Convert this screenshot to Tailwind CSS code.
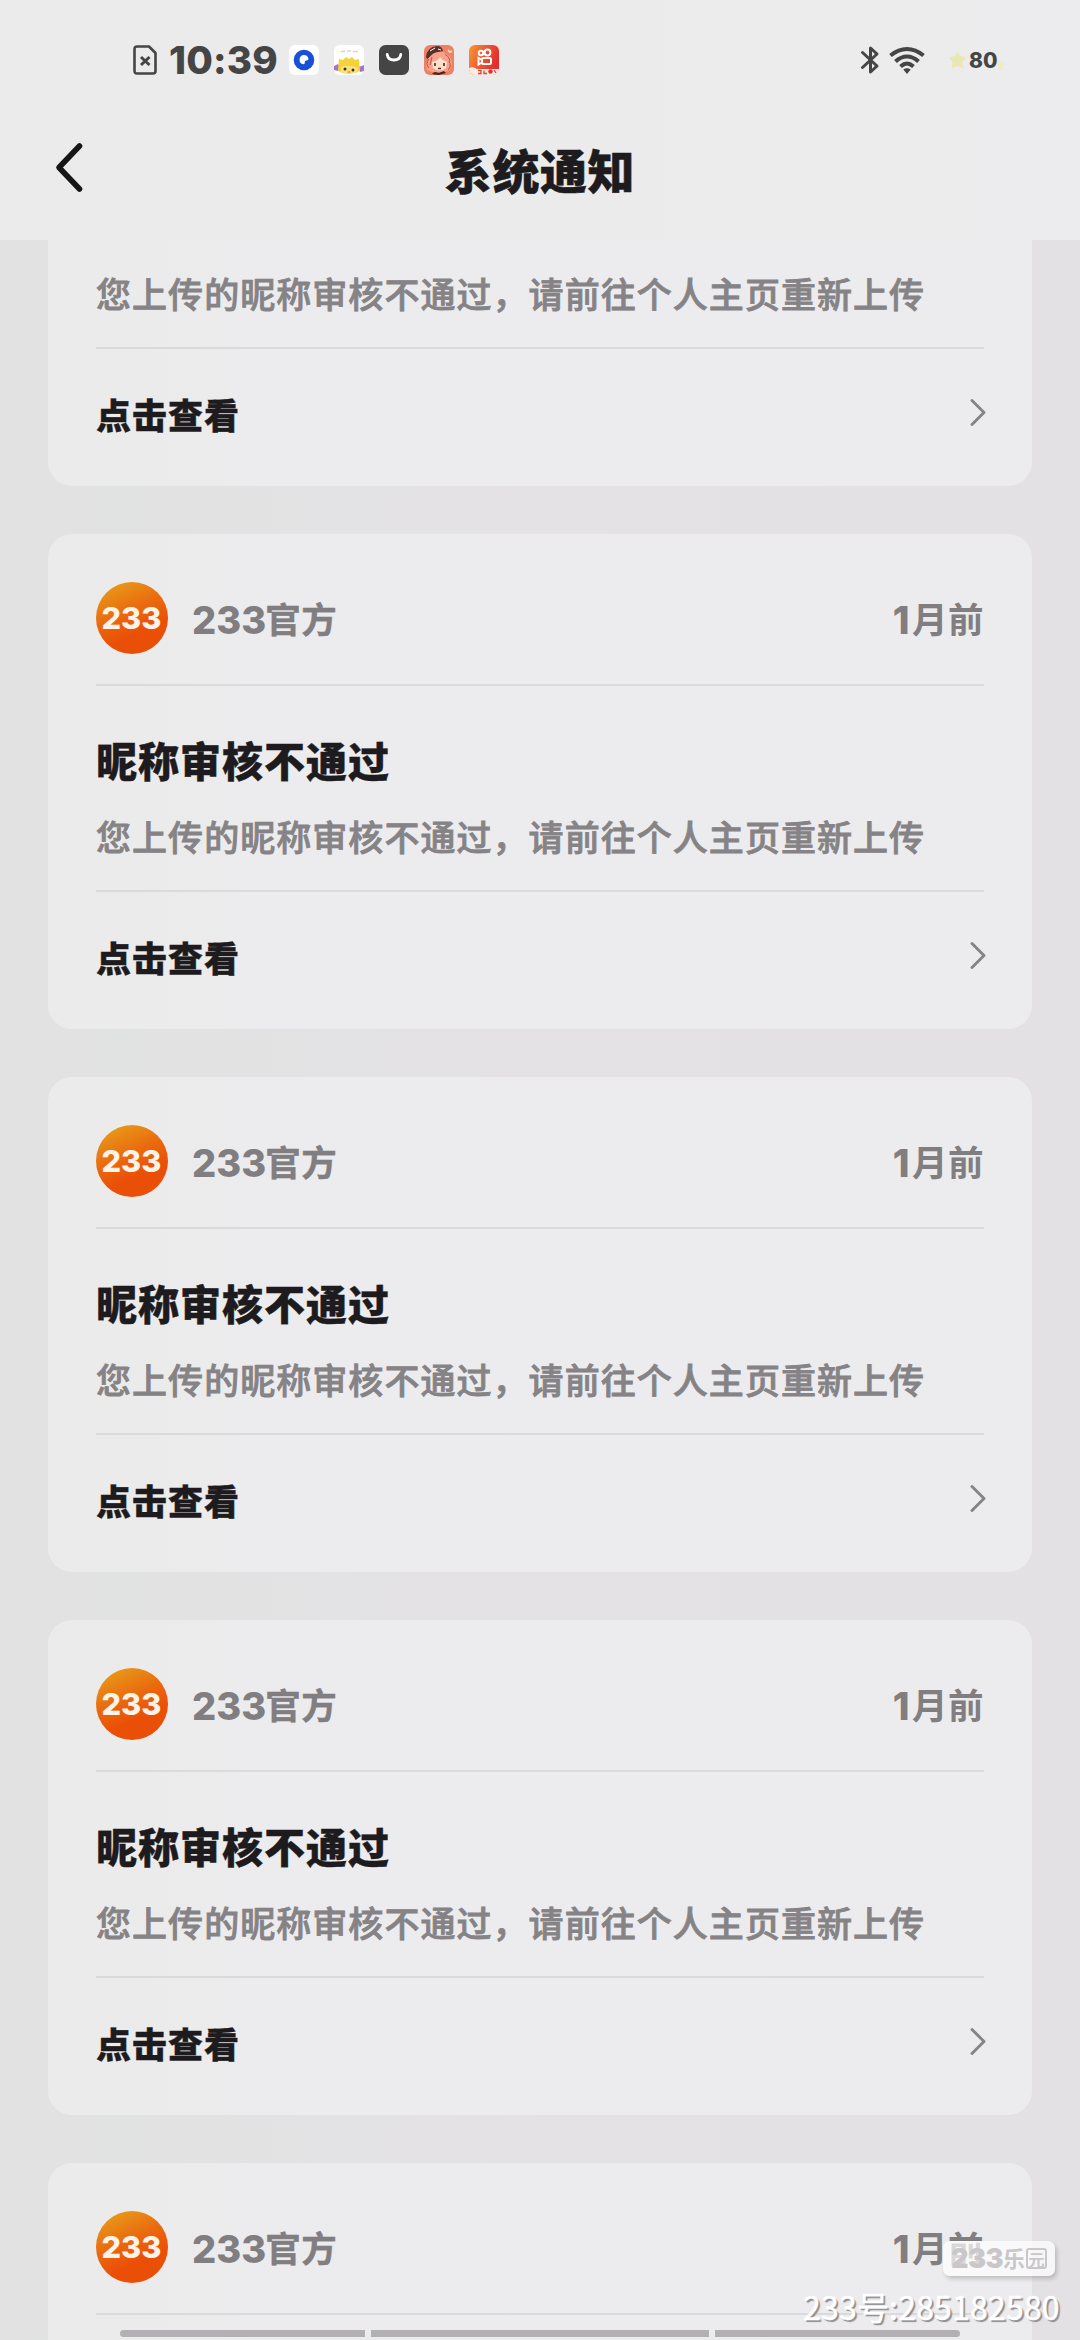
<!DOCTYPE html>
<html lang="zh-CN">
<head>
<meta charset="utf-8">
<title>系统通知</title>
<script src="https://cdn.jsdelivr.net/npm/@tailwindcss/browser@4"></script>
</head>
<body class="relative flex h-[2340px] w-[1080px] flex-col overflow-hidden bg-linear-to-r from-[#e1e2e1] via-[#e3e2e4] via-30% to-[#e3e1e4] font-['Noto_Sans_CJK_SC',sans-serif] text-[#1d1b1e]">

<header class="h-[240px] shrink-0 bg-linear-to-r from-[#ebebeb] to-[#ecebed]">
  <!-- Status bar -->
  <div class="flex h-[120px] items-center pr-[79px] pl-[133px] text-[#454545]">
    <svg class="h-[30px] w-[24px]" viewBox="0 0 24 30" fill="none" stroke="currentColor" stroke-width="2.6"><path d="M4 1.5H16L22.5 8V26Q22.5 28.5 20 28.5H4Q1.5 28.5 1.5 26V4Q1.5 1.5 4 1.5Z" stroke-linejoin="round"/><path d="M8 12L16.5 20M16.5 12L8 20" stroke-width="3"/></svg>
    <span class="ml-[12px] w-[108px] font-['Inter',sans-serif] text-[38.5px] leading-none font-extrabold tracking-[0.2px] whitespace-nowrap">10:39</span>
    <div class="ml-3 flex gap-[15px]">
      <svg class="size-[30px]" viewBox="0 0 30 30"><rect width="30" height="30" rx="6" fill="#fff"/><circle cx="15" cy="15" r="10.3" fill="#1a50d8"/><path d="M10.6 15a4.4 4.4 0 0 1 8.8-1.2q.4 1.8-2 1.8-2 .2-1.6 1.9.2 1.9-1.4 1.8A4.4 4.4 0 0 1 10.6 15Z" fill="#fff"/></svg>
      <svg class="size-[30px]" viewBox="0 0 30 30"><rect width="30" height="30" rx="6" fill="#fff"/><path d="M7 6.5h4M13 6h4M19 6.5h5" stroke="#d5d5d5" stroke-width="1.5"/><path d="M0 21l4-2 2 3-2 4-4-1zM30 20l-5 2 1 5 4-1z" fill="#a873cf"/><path d="M5 14l4 1 3-3 3 2 3-2 3 3 4-1 1 12q-11 6-22 0Z" fill="#f3d23b"/><path d="M7 22q8-3 17 1l-1 4q-8 3-16 0Z" fill="#fbe37a"/><circle cx="11" cy="24" r="1.5" fill="#333"/><circle cx="19" cy="25" r="1.5" fill="#333"/><path d="M13.500 27h3" stroke="#ef8b3a" stroke-width="1.500"/></svg>
      <svg class="size-[30px]" viewBox="0 0 30 30"><rect width="30" height="30" rx="6.500" fill="#454545"/><path d="M8.200 9.500Q9 15 15 15T21.800 9.500" fill="none" stroke="#fff" stroke-width="2.800" stroke-linecap="round"/></svg>
      <svg class="size-[30px]" viewBox="0 0 30 30"><rect width="30" height="30" rx="6" fill="#ee8063"/><path d="M2 12Q3 2 13 1q5 0 6 5l-7 2-9 6Z" fill="#57302b"/><path d="M6 6l5-3M14 4l3 1" stroke="#fff" stroke-width="1"/><path d="M4 14Q10 5 19 7q9 3 9 12l-2 6-5 2H8l-5-2-1-6Z" fill="#f8a28b"/><path d="M8 17q6-1 8-5 3 4 7 5l-1 6q-6 5-13 0Z" fill="#fde0cb"/><path d="M11 18v3M20 18v3M14 23.500h3" stroke="#57302b" stroke-width="1.700"/><path d="M5 14q-4 5 0 9M8 12l-2 8M25 16q3 5-1 9M21 9q5 3 5 7" stroke="#b8503f" stroke-width="1" fill="none"/><path d="M24 5l2 2 2-1" stroke="#fbd9c4" stroke-width="2"/><path d="M8 28.500l3-1.500 4 1 5-2 2 2-7 2-5-.5Z" fill="#3f2825"/></svg>
      <svg class="size-[30px]" viewBox="0 0 30 30"><defs><linearGradient id="ks" x1="0" y1="0" x2="1" y2=".4"><stop offset="0" stop-color="#f79a32"/><stop offset=".6" stop-color="#ed5030"/><stop offset="1" stop-color="#e22e30"/></linearGradient></defs><rect width="30" height="30" rx="6" fill="url(#ks)"/><g fill="none" stroke="#fff" stroke-width="2"><circle cx="12" cy="8" r="2.300"/><circle cx="18.500" cy="7.500" r="2.900"/><rect x="13" y="13" width="9" height="6" rx="1.500"/><path d="M13 15L9.500 13V19.500L13 17.500"/></g><path d="M0 23Q4 21 8 24H30Q30 30 24 30H6Q0 30 0 23Z" fill="#fbe9e2"/><path d="M9 25.500h3v3h-3M15 25.500v3h3M25 25l2 3" fill="none" stroke="#ce4a3a" stroke-width="1.300"/><circle cx="21.500" cy="26.500" r="2.200" fill="#df3033"/></svg>
    </div>
    <div class="ml-auto flex items-center">
      <svg class="h-[30px] w-[20px]" viewBox="0 0 20 30" fill="none" stroke="currentColor" stroke-width="3" stroke-linejoin="round" stroke-linecap="round"><path d="M2.500 7.500L17 21L10.500 27V3L17 9L2.500 22.500"/></svg>
      <svg class="ml-[9px] h-[30px] w-[36px]" viewBox="0 0 36 30" fill="none" stroke="currentColor" stroke-width="4"><path d="M1.500 10.500Q9.500 4 18 4T34.500 10.500"/><path d="M6.500 16.500Q12 11.500 18 11.500T29.500 16.500"/><path d="M11.500 21.500Q15 18.500 18 18.500T24.500 21.500"/><path d="M14.300 24.500Q18 22 21.700 24.500L18 29Z" fill="currentColor" stroke="none"/></svg>
      <svg class="ml-[24px] h-[20px] w-[17px]" viewBox="0 0 17 20"><path d="M9 1l2.500 5 5.500 1-3.500 5 1 6-6-2-6 2 1-6L0 7.500l6-1.500Z" fill="#e9e7b4"/></svg>
      <span class="ml-[3px] w-[28px] font-['Inter',sans-serif] text-[21px] leading-none font-extrabold">80</span>
      <svg class="mt-2 -mr-1 h-[14px] w-[8px]" viewBox="0 0 8 14"><path d="M3 3l1.500 3 3 1-2.500 2 1 4-5-1V5Z" fill="#eeecc4"/></svg>
    </div>
  </div>
  <!-- Title bar -->
  <div class="grid h-[98px] grid-cols-[200px_1fr_200px] items-center">
    <svg class="-mt-1 ml-[54px] h-[52px] w-[30px]" viewBox="0 0 30 52" fill="none" stroke="#161616" stroke-width="5.600" stroke-linecap="round" stroke-linejoin="round"><path d="M25.500 5L5 26.500L25.500 48"/></svg>
    <h1 class="text-center text-[47px] leading-[48px] font-black tracking-[0.6px] [-webkit-text-stroke:0.5px_#1d1b1e]">系统通知</h1>
  </div>
</header>

<main id="list" class="flex h-[2100px] shrink-0 flex-col gap-12 overflow-hidden px-12"></main>

<!-- Gesture bar -->
<div class="absolute top-[2330px] left-[120px] flex h-[7px] w-[840px] gap-[6px]">
  <i class="w-[245px] rounded-l-full bg-[#b3b0b3]"></i><i class="flex-1 bg-[#b3b0b3]"></i><i class="w-[245px] rounded-r-full bg-[#b3b0b3]"></i>
</div>

<!-- Watermark -->
<div class="absolute top-[2241px] left-[943px] flex h-[35px] w-[112px] items-center justify-center rounded-[7px] bg-white/70 whitespace-nowrap text-[#c9c7c9] shadow-[2px_3px_4px_rgba(0,0,0,0.18)]">
  <span class="font-['Inter',sans-serif] text-[27px] leading-none font-black tracking-[-0.5px]">233</span><span class="-mt-1 text-[22px] leading-none font-bold">乐</span><span class="ml-px flex size-[21px] items-center justify-center rounded-[3px] border-2 border-[#c9c7c9] text-[16px] leading-none font-bold">元</span>
</div>
<div class="absolute top-[2286px] left-[803px] text-[32px] leading-[40px] tracking-[0.2px] whitespace-nowrap text-white [-webkit-text-stroke:0.4px_white] [text-shadow:2px_2px_1px_#8f8d90]">233号:285182580</div>

<script>
  const fill = 'bg-linear-to-r from-[#ebebeb] via-[#ecebed] via-20% to-[#ecebed]';
  const head = `
    <div class="flex h-[150px] shrink-0 items-center pt-[18px] text-[35.5px] leading-none font-bold tracking-[0.5px] text-[#807e80]">
      <svg class="size-[72px]" viewBox="0 0 72 72">
        <defs><linearGradient id="av" x1=".15" y1="0" x2=".6" y2="1"><stop offset="0" stop-color="#e7a01a"/><stop offset=".45" stop-color="#ea6a0e"/><stop offset=".75" stop-color="#ea4f07"/></linearGradient></defs>
        <circle cx="36" cy="36" r="36" fill="url(#av)"/>
        <text x="5.500" y="47" textLength="60" lengthAdjust="spacingAndGlyphs" font-family="Inter, sans-serif" font-weight="800" font-size="30" letter-spacing="0" fill="#fff3e8">233</text>
      </svg>
      <span class="mt-[3px] ml-6 font-['Inter',sans-serif] text-[38px] font-extrabold tracking-normal">233</span><span class="-mt-px ml-[-1px] [-webkit-text-stroke:0.4px_#807e80]">官方</span>
      <span class="mt-[3px] mr-[2px] ml-auto font-['Inter',sans-serif] text-[38px] font-extrabold">1</span><span class="-mt-px">月前</span>
    </div>
    <div class="h-[2px] shrink-0 bg-[#dad9db]"></div>`;
  const foot = `
    <p class="text-[35px] leading-9 font-medium tracking-[1.05px] whitespace-nowrap text-[#858385] [-webkit-text-stroke:0.8px_#858385]">您上传的昵称审核不通过，请前往个人主页重新上传</p>
    <div class="mt-9 h-[2px] bg-[#dad9db]"></div>
    <div class="flex h-[132px] items-center justify-between text-[35px] leading-9 font-black tracking-[1px]">
      <span class="-mt-0.5 [-webkit-text-stroke:0.4px_#1d1b1e]">点击查看</span>
      <svg class="-mt-1.5 -mr-0.5 h-[28px] w-[18px]" viewBox="0 0 18 28" fill="none" stroke="#858386" stroke-width="2.900" stroke-linecap="round" stroke-linejoin="round"><path d="M4 2.500L16 14.500L4 26.500"/></svg>
    </div>`;
  const title = `<h2 class="mt-[52px] mb-[38px] text-[41px] leading-[42px] font-black tracking-[1px] [-webkit-text-stroke:0.4px_#1d1b1e]">昵称审核不通过</h2>`;
  document.getElementById('list').innerHTML =
    `<article class="h-[246px] shrink-0 rounded-b-[24px] px-12 pt-[35px] ${fill}">${foot}</article>` +
    `<article class="flex h-[495px] shrink-0 flex-col rounded-[24px] px-12 ${fill}">${head}${title}${foot}</article>`.repeat(3) +
    `<article class="h-[177px] shrink-0 rounded-t-[24px] px-12 ${fill}">${head}</article>`;
</script>
</body>
</html>
